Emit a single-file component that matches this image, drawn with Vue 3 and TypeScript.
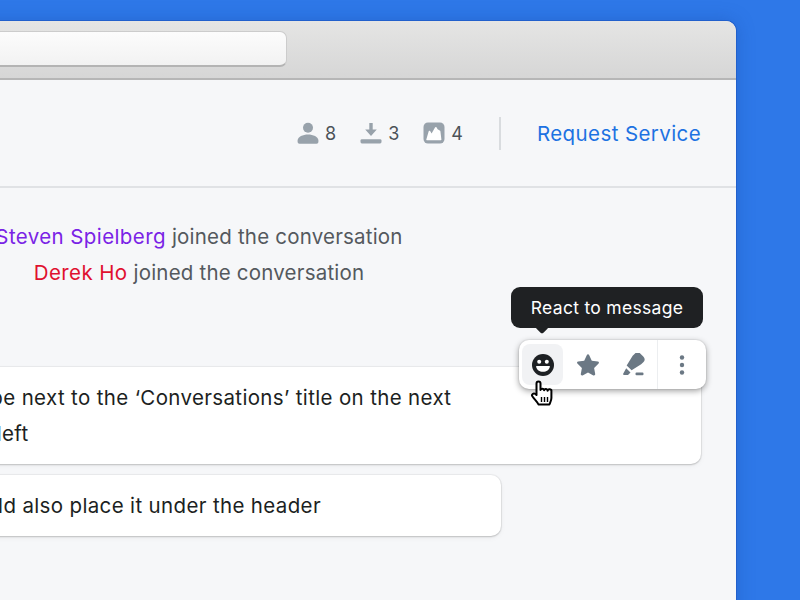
<script setup lang="ts">
const stats = [
  { id: 'person', n: 8 },
  { id: 'download', n: 3 },
  { id: 'image', n: 4 },
]
</script>

<template>
  <div class="stage">
    <div class="window">
      <div class="chrome"><div class="address"></div></div>
      <header class="head">
        <div class="stats">
          <div v-for="s in stats" :key="s.id" class="stat">
            <svg class="ic" viewBox="0 0 22 22" width="22" height="22">
              <g v-if="s.id === 'person'" fill="#98a2ab">
                <circle cx="11" cy="5.800" r="5" />
                <path d="M.6 18.500C.6 14.600 6 12.400 11 12.400s10.400 2.200 10.400 6.100v1.400a1.800 1.800 0 0 1-1.800 1.800H2.400A1.800 1.800 0 0 1 .6 19.900z" />
              </g>
              <g v-else-if="s.id === 'download'" fill="#98a2ab">
                <path d="M9.300 1h3.400v6.500h4.100L11 14 5.200 7.500h4.100z" />
                <rect x=".5" y="17.200" width="21" height="4.300" rx="1.400" />
              </g>
              <g v-else>
                <rect x=".5" y=".5" width="21" height="21" rx="4.500" fill="#98a2ab" />
                <path d="M3.800 18.200c-.4 0-.6-.3-.5-.7l2.400-8.200c.2-.7 1-.8 1.400-.2l1.500 2.300 3.400-6c.4-.7 1.300-.7 1.700 0l.9 1.800 2.100 1.200c.4.200.6.500.7.900l1 8.200c.1.400-.2.700-.6.700z" fill="#fff" />
              </g>
            </svg>
            <span>{{ s.n }}</span>
          </div>
        </div>
        <div class="sep"></div>
        <a class="req">Request Service</a>
      </header>
      <main class="feed">
        <div class="system">
          <p><b class="purple">Steven Spielberg</b> joined the conversation</p>
          <p><b class="red">Derek Ho</b> joined the conversation</p>
        </div>
        <section class="msg first">
          <p>It could be next to the ‘Conversations’ title on the next</p>
          <p class="tail">on the left</p>
          <div class="toolbar">
            <div class="tip">React to message</div>
            <button class="btn on">
              <svg viewBox="0 0 24 24" width="24" height="24">
                <circle cx="12" cy="12" r="11" fill="#1d2023" />
                <circle cx="8.200" cy="8.800" r="2" fill="#fff" />
                <circle cx="15.800" cy="8.800" r="2" fill="#fff" />
                <path d="M5.600 13h12.800c.4 0 .6.300.5.700-.6 3-3.400 5-6.900 5s-6.300-2-6.900-5c-.1-.4.100-.7.500-.7z" fill="#fff" />
              </svg>
            </button>
            <button class="btn">
              <svg viewBox="0 0 24 24" width="24" height="24">
                <path d="M12 1.300c.5 0 .9.300 1.100.7l2.700 5.700 6.100.8c1 .1 1.400 1.400.7 2.100l-4.500 4.300 1.100 6.200c.2 1-.9 1.800-1.800 1.300L12 19.400l-5.400 3c-.9.500-2-.3-1.800-1.300l1.100-6.200-4.500-4.300c-.7-.7-.3-2 .7-2.100l6.100-.8L10.900 2c.2-.4.600-.7 1.100-.7z" fill="#6b7884" />
              </svg>
            </button>
            <button class="btn">
              <svg viewBox="0 0 24 24" width="24" height="24" fill="#6b7884">
                <path transform="translate(14.500 8.500) rotate(-45)" d="M-9-3.500L2-6h3a4 4 0 0 1 4 4v4a4 4 0 0 1-4 4H2L-9 3.500z" />
                <path d="M5.200 15.200l4.300 4.300-2.500 2.500H3c-.8 0-1.200-.8-.7-1.400z" />
                <rect x="14.500" y="19.500" width="8" height="2.800" rx="1" />
              </svg>
            </button>
            <div class="bar"></div>
            <button class="btn more">
              <svg viewBox="0 0 24 24" width="24" height="24" fill="#6b7884">
                <circle cx="12" cy="4.500" r="2.200" />
                <circle cx="12" cy="12" r="2.200" />
                <circle cx="12" cy="19.500" r="2.200" />
              </svg>
            </button>
            <svg class="hand" viewBox="0 0 24 28" width="24" height="28">
              <path d="M6.500 3.500a2 2 0 0 1 4 0V10a1.900 1.900 0 0 1 3.600.2 1.800 1.800 0 0 1 3.500.6 1.900 1.900 0 0 1 3.800.7V18c0 2.500-1 4-2 6.500H8.500c-1-2.500-3.500-4.500-6-8-1.500-2 1-4 3-2.500l1 1z" fill="#fff" stroke="#000" stroke-width="2" stroke-linejoin="round" />
              <path d="M11.500 17v5M14.500 17v5M17.500 17v5" stroke="#000" stroke-width="1.400" fill="none" />
            </svg>
          </div>
        </section>
        <section class="msg second">
          <p>We could also place it under the header</p>
        </section>
      </main>
    </div>
  </div>
</template>

<style>
html, body { margin: 0; background: #2e78e8; overflow: hidden; }
</style>

<style scoped>
.stage {
  width: 800px;
  height: 600px;
  overflow: hidden;
  background: #2e78e8;
  font-family: Inter, "Liberation Sans", sans-serif;
  padding-top: 21px;
  box-sizing: border-box;
}
.window {
  margin-left: -100px;
  width: 836px;
  height: 640px;
  border-radius: 0 10px 0 0;
  background: #f6f7f9;
  box-shadow: 0 0 0 1px #2160cc, 0 0 18px rgba(20, 70, 160, 0.35);
  overflow: hidden;
}
.chrome {
  height: 59px;
  box-sizing: border-box;
  border-bottom: 2px solid #b6b6b6;
  background: linear-gradient(#e5e5e4, #d6d6d6);
  padding-top: 10px;
}
.address {
  width: 387px;
  height: 36px;
  box-sizing: border-box;
  border: 1px solid #cccccc;
  border-bottom: 2px solid #b4b4b4;
  border-radius: 0 7px 7px 0;
  background: linear-gradient(#fcfcfc, #f2f2f2);
}
.head {
  height: 108px;
  box-sizing: border-box;
  border-bottom: 2px solid #e0e2e5;
  display: flex;
  align-items: center;
  justify-content: flex-end;
  padding: 0 35px 0 0;
}
.stats { display: flex; gap: 24px; }
.stat {
  display: flex;
  align-items: center;
  gap: 6px;
  font-size: 18px;
  color: #4c5258;
}
.ic { display: block; }
.sep { width: 2px; height: 33px; background: #d9dcdf; margin: 0 36px 0 36px; }
.req { font-size: 20.500px; color: #1d72e2; letter-spacing: 0.400px; }
.feed { padding-top: 31px; }
.system {
  width: 598px;
  text-align: center;
  font-size: 20.500px;
  letter-spacing: 0.200px;
  line-height: 36px;
  color: #54595e;
}
.system p, .msg p { margin: 0; }
.system b { font-weight: 400; letter-spacing: 0.400px; }
.purple { color: #7a23e6; }
.red { color: #e0102f; }
.msg {
  position: relative;
  box-sizing: border-box;
  background: #fff;
  border-radius: 0 10px 10px 0;
  box-shadow: 0 1px 2px rgba(0, 0, 0, 0.18), 0 0 0 1px rgba(0, 0, 0, 0.04), 0 2px 6px rgba(0, 0, 0, 0.04);
  font-size: 20.500px;
  letter-spacing: 0.350px;
  line-height: 36px;
  color: #1c1f22;
  padding: 13px 0 12px 0;
  white-space: nowrap;
}
.first p { text-indent: 9.500px; }
.first p.tail { text-indent: 27.500px; }
.second p { text-indent: 23px; }
.first { margin-top: 76px; width: 801px; }
.second { margin-top: 11px; width: 601px; }
.toolbar {
  position: absolute;
  top: -27px;
  right: -5px;
  width: 187px;
  height: 49px;
  box-sizing: border-box;
  background: #fff;
  border-radius: 10px;
  box-shadow: 0 2px 6px rgba(0, 0, 0, 0.38), 0 0 0 1px rgba(0, 0, 0, 0.04);
  display: flex;
  align-items: center;
  padding-left: 3px;
}
.tip {
  position: absolute;
  left: -8px;
  top: -53px;
  width: 192px;
  height: 41px;
  border-radius: 9px;
  background: #1f2123;
  color: #fff;
  font-size: 17.500px;
  letter-spacing: 0.300px;
  line-height: 42px;
  text-align: center;
  text-indent: 0;
}
.tip::after {
  content: "";
  position: absolute;
  left: 26px;
  bottom: -4px;
  width: 10px;
  height: 10px;
  background: #1f2123;
  border-radius: 2px;
  transform: rotate(45deg);
}
.btn {
  width: 41px;
  height: 41px;
  flex: none;
  padding: 0;
  margin: 0 4px 0 0;
  border: 0;
  border-radius: 8px;
  background: transparent;
  display: flex;
  align-items: center;
  justify-content: center;
}
.btn.on { background: #f1f2f4; }
.bar { width: 1px; height: 49px; flex: none; background: #eceef0; }
.more { margin: 0 0 0 3px; }
.hand { position: absolute; left: 11px; top: 40px; }
</style>
